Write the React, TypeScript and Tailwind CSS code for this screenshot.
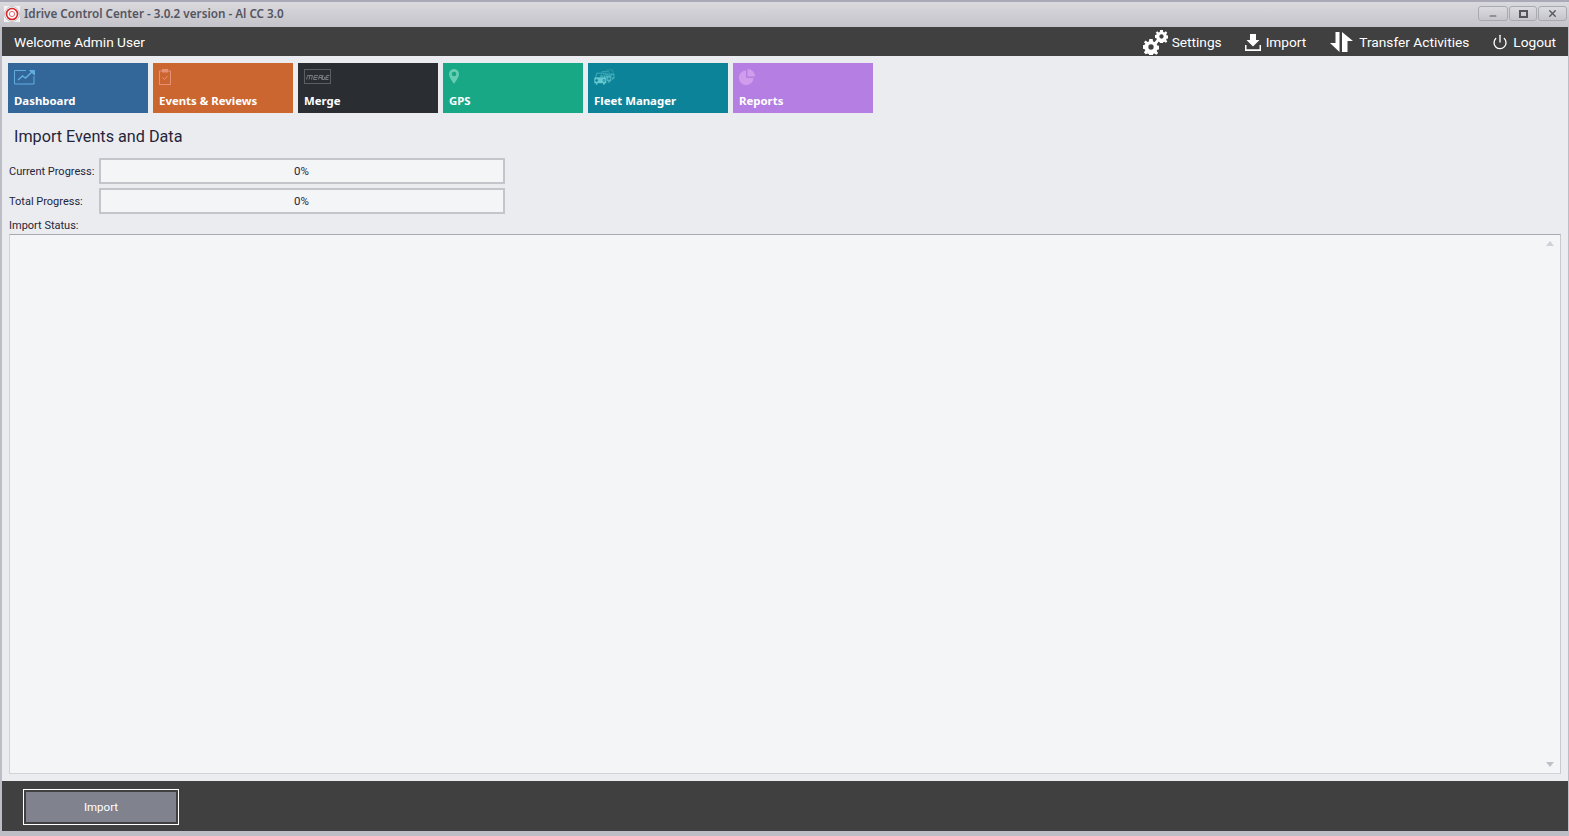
import React from "react";
import { Power, Minus, X } from "lucide-react";

const ui = "font-['Roboto','Liberation_Sans',sans-serif]";
const tahoma = "font-['Noto_Sans','Liberation_Sans',sans-serif]";

function Gear({ size, className }: { size: number; className?: string }) {
  return (
    <svg width={size} height={size} viewBox="0 0 24 24" className={className} fill="currentColor">
      <path
        fillRule="evenodd"
        d="M9.500 0h5l.7 3.600 1.900.8L20 2.300 22.700 5l-2.100 2.900.8 1.900 3.600.7v5l-3.600.7-.8 1.900 2.100 2.900-2.700 2.700-2.900-2.100-1.900.8-.7 3.600h-5l-.7-3.600-1.900-.8L4 22.700 1.300 20l2.100-2.900-.8-1.900L-1 14.500v-5l3.600-.7.8-1.900L1.300 5 4 2.300l2.900 2.100 1.900-.8zM12 8a4 4 0 1 0 0 8 4 4 0 0 0 0-8z"
      />
    </svg>
  );
}

function SettingsIcon() {
  return (
    <span className="relative block h-[25px] w-[25px]">
      <Gear size={16} className="absolute bottom-0 left-0" />
      <Gear size={13} className="absolute right-0 top-0" />
    </span>
  );
}

function ImportIcon() {
  return (
    <svg width="16" height="17" viewBox="0 0 16 17" fill="currentColor">
      <path d="M5 0h6v6h3.500L8 12.500 1.500 6H5z" />
      <path d="M0 11h1.500v4.200h13V11H16v6H0z" />
    </svg>
  );
}

function TransferIcon() {
  return (
    <svg width="23" height="20" viewBox="0 0 23 20" fill="currentColor">
      <path d="M5.500 0h4v20L0 11h5.500zM12 0l11 9h-5.500v11H12z" />
    </svg>
  );
}

function Logo() {
  return (
    <svg width="16" height="16" viewBox="0 0 16 16">
      <rect width="16" height="16" fill="#f4f4f6" />
      <circle cx="8" cy="8" r="7.500" fill="none" stroke="#c5c5cb" strokeWidth="1" />
      <circle cx="8" cy="8" r="5.500" fill="#fff" stroke="#d9262b" strokeWidth="1.600" />
      <circle cx="8" cy="8" r="2.600" fill="#fff" stroke="#e4686b" strokeWidth="1" />
    </svg>
  );
}

function DashboardIcon() {
  return (
    <svg width="22" height="16" viewBox="0 0 22 16" fill="none" stroke="#62ade0" strokeWidth="1">
      <path d="M12 1.500H.5v13.500h19.500V7" />
      <path d="M4 11l4.500-4 3 2L18 3" strokeWidth="1.500" />
      <path d="M15.500 1.500h5v4.500z" fill="#62ade0" />
    </svg>
  );
}

function EventsIcon() {
  return (
    <svg width="12" height="16" viewBox="0 0 12 16" fill="none" stroke="#e69076" strokeWidth="1">
      <rect x="0.500" y="2" width="11" height="13.500" />
      <rect x="3.500" y="0.500" width="5" height="2.500" fill="#e69076" />
      <path d="M3.500 8.500l2 2 3-3.500" />
    </svg>
  );
}

function MergeIcon() {
  return (
    <svg width="27" height="15" viewBox="0 0 27 15" fill="none">
      <rect x="0.500" y="0.500" width="26" height="14" stroke="#5c5e62" />
      <path
        d="M2.500 10.500l1-4h5l-1 4M6 6.500l-1 4M9.500 10.500l1-4h3.500M10 8.500h3.500M9.500 10.500h3.500M14.500 10.500l1-4h3l-.5 2h-3M17 8.500l1 2M19.500 6.500h-.5l-1 4h2.500l.5-2h-1M21.500 10.500l1-4h3M22 8.500h2.500M21.500 10.500h3"
        stroke="#77797d"
      />
    </svg>
  );
}

function GpsIcon() {
  return (
    <svg width="10" height="15" viewBox="0 0 10 15" fill="#66cdb0">
      <path
        fillRule="evenodd"
        d="M5 0a5 5 0 0 1 5 5c0 3-3 7-5 10C3 12 0 8 0 5a5 5 0 0 1 5-5zm0 2.700a2.300 2.300 0 1 0 0 4.600 2.300 2.300 0 0 0 0-4.600z"
      />
    </svg>
  );
}

function Car({ x, y, scale, fill }: { x: number; y: number; scale: number; fill: string }) {
  return (
    <g transform={`translate(${x} ${y}) scale(${scale})`}>
      <path
        fillRule="evenodd"
        fill={fill}
        stroke="#0d8399"
        strokeWidth="0.600"
        d="M1 5l1.500-4.500h7L11 5l1 1v5h-1.500v1.500h-2V11h-5v1.500h-2V11H0V6zM3.200 1.700L2.300 4.800h7.400l-.9-3.100zM2.500 7a1 1 0 1 0 0 2 1 1 0 0 0 0-2zm7 0a1 1 0 1 0 0 2 1 1 0 0 0 0-2z"
      />
    </g>
  );
}

function FleetIcon() {
  return (
    <svg width="21" height="16" viewBox="0 0 21 16">
      <Car x={10} y={0} scale={0.9} fill="#45aeb9" />
      <Car x={5.500} y={1.500} scale={1} fill="#4fb7c0" />
      <Car x={0} y={3} scale={1.050} fill="#66c9cf" />
    </svg>
  );
}

function ReportsIcon() {
  return (
    <svg width="16" height="16" viewBox="0 0 16 16" fill="#d19cec">
      <path d="M7 1.500v7.500h7.500A7.300 7.300 0 1 1 7 1.500z" />
      <path d="M8.500 0a7.500 7.500 0 0 1 7.500 7.500H8.500z" />
    </svg>
  );
}

const tiles = [
  { label: "Dashboard", bg: "bg-[#336699]", icon: <DashboardIcon /> },
  { label: "Events & Reviews", bg: "bg-[#cb6631]", icon: <EventsIcon /> },
  { label: "Merge", bg: "bg-[#2a2d32]", icon: <MergeIcon /> },
  { label: "GPS", bg: "bg-[#19a886]", icon: <GpsIcon /> },
  { label: "Fleet Manager", bg: "bg-[#0d8399]", icon: <FleetIcon /> },
  { label: "Reports", bg: "bg-[#b57ee2]", icon: <ReportsIcon /> },
];

function Progress({ label }: { label: string }) {
  return (
    <div className="flex items-center">
      <div className="w-[90px] whitespace-nowrap pt-[2px] text-[11px] text-[#25253a]">{label}</div>
      <div className="flex h-[26px] w-[406px] items-center justify-center border-2 border-[#c4c5cb] bg-[#f4f5f7] pr-[1px] pt-[2px] text-[11.500px] text-[#25253a]">
        0%
      </div>
    </div>
  );
}

function WinButton({ width, children }: { width: string; children: React.ReactNode }) {
  return (
    <div className={`${width} flex h-[15px] items-center justify-center rounded-[3px] border border-[#a9a9b0] bg-gradient-to-b from-[#dcdce0] to-[#c6c6ca] text-[#55565c]`}>
      {children}
    </div>
  );
}

export default function App() {
  return (
    <div className={`${ui} flex h-[836px] w-[1569px] flex-col overflow-hidden border-t-2 border-[#a9a9b8] bg-[#bdbdc6]`}>
      <div className="flex h-[25px] items-center bg-gradient-to-b from-[#d9d9de] to-[#c3c3c9] pb-[2px] pl-1 pr-[2px]">
        <Logo />
        <div className={`${tahoma} ml-1 text-[11.700px] font-semibold text-[#55555f]`}>Idrive Control Center - 3.0.2 version - Al CC 3.0</div>
        <div className="ml-auto flex gap-[1px]">
          <WinButton width="w-[30px]">
            <Minus size={10} strokeWidth={2.500} className="translate-y-[2px]" />
          </WinButton>
          <WinButton width="w-[28px]">
            <div className="h-[8px] w-[9px] border-2 border-[#55565c]" />
          </WinButton>
          <WinButton width="w-[29px]">
            <X size={11} strokeWidth={3} />
          </WinButton>
        </div>
      </div>

      <div className="mx-[2px] flex h-[804px] w-[1566px] flex-col bg-[#ebecf0]">
        <div className="flex h-[29px] items-center justify-between bg-[#404040] pl-3 pr-[12px] pt-[2px] text-[13.700px] text-white">
          <div>Welcome Admin User</div>
          <div className="flex items-center">
            <div className="flex items-center gap-[4px]">
              <SettingsIcon />
              <span>Settings</span>
            </div>
            <div className="ml-[23px] flex items-center gap-[5px]">
              <ImportIcon />
              <span>Import</span>
            </div>
            <div className="ml-[24px] flex items-center gap-[6px]">
              <TransferIcon />
              <span>Transfer Activities</span>
            </div>
            <div className="ml-[23px] flex items-center gap-[5px]">
              <Power size={16} strokeWidth={2} />
              <span>Logout</span>
            </div>
          </div>
        </div>

        <div className={`${tahoma} mt-[7px] flex gap-[5px] pl-[6px]`}>
          {tiles.map((t) => (
            <div key={t.label} className={`${t.bg} flex h-[50px] w-[140px] flex-col justify-between px-[6px] pb-[5px] pt-[6px]`}>
              <div className="flex h-[16px] items-start">{t.icon}</div>
              <div className="text-[11.400px] font-bold leading-[14px] text-white">{t.label}</div>
            </div>
          ))}
        </div>

        <div className="mt-[12px] pl-3 pt-[1px] text-[16.200px] leading-[22px] text-[#25253a]">Import Events and Data</div>

        <div className="mt-[10px] flex flex-col gap-[4px] pl-[7px]">
          <Progress label="Current Progress:" />
          <Progress label="Total Progress:" />
        </div>

        <div className="mt-[5px] pl-[7px] text-[11px] leading-[14px] text-[#25253a]">Import Status:</div>

        <div className="ml-[7px] mt-[1px] flex h-[540px] w-[1552px] flex-col items-end justify-between border border-t-[#a8a9b2] border-r-[#c8c9cf] border-b-[#d2d3d8] border-l-[#d2d3d8] bg-[#f4f5f7] py-[6px] pl-[7px] pr-[6px]">
          <div className="h-0 w-0 border-x-[4px] border-b-[5px] border-x-transparent border-b-[#d0d1d6]" />
          <div className="h-0 w-0 border-x-[4px] border-t-[5px] border-x-transparent border-t-[#c0c1c6]" />
        </div>

        <div className="mt-[7px] flex h-[50px] items-center bg-[#404040] pl-[21px] pt-[2px]">
          <button className="h-[36px] w-[156px] border border-white bg-[#80828e] pt-[1px] text-[11.500px] text-white outline-2 -outline-offset-3 outline-[#404040]">
            Import
          </button>
        </div>
      </div>
    </div>
  );
}
